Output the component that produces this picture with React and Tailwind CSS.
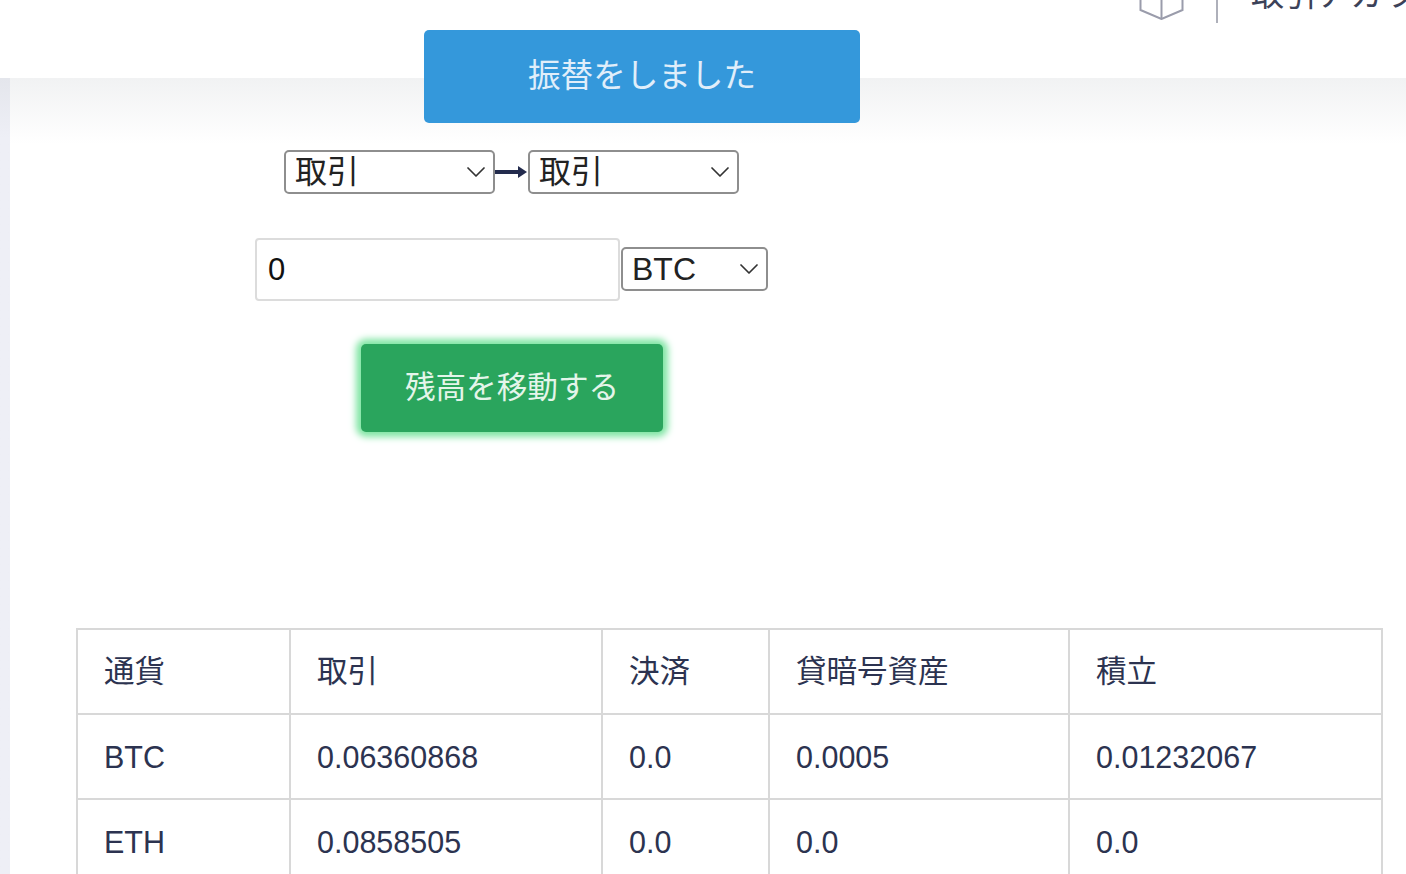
import { ChevronDown } from "lucide-react";

const FONT = "font-['Liberation_Sans','Noto_Sans_CJK_JP',sans-serif]";

const balances = [
  { coin: "BTC", trade: "0.06360868", settle: "0.0", lending: "0.0005", saving: "0.01232067" },
  { coin: "ETH", trade: "0.0858505", settle: "0.0", lending: "0.0", saving: "0.0" },
];

const cell = "border-2 border-[#d8d8d8] px-[26px] h-[85px] text-left font-normal align-middle";

const Select = ({ value, className }) => (
  <div className={`relative shrink-0 h-[44px] ${className}`}>
    <select
      defaultValue={value}
      className="block w-full h-full appearance-none rounded-[5px] border-2 border-[#8e8e8e] bg-white pl-[9px] text-[32px] leading-none text-[#222]"
    >
      <option>{value}</option>
    </select>
    <ChevronDown
      className="absolute right-[3px] top-[6px] w-[32px] h-[32px] text-[#333] pointer-events-none"
      strokeWidth={1.3}
    />
  </div>
);

export default function App() {
  return (
    <div className={`h-[874px] overflow-hidden bg-white ${FONT}`}>
      <header className="h-[78px] overflow-hidden flex items-start">
        <svg
          viewBox="0 0 44 24"
          className="ml-[1139px] -mt-[4px] w-[45px] h-[24px] shrink-0 text-[#9a9cab]"
          fill="none"
          stroke="currentColor"
          strokeWidth="2"
        >
          <path d="M1 0v14l21 9 21-9V0" />
          <path d="M22 0v23" />
        </svg>
        <div className="ml-[32px] w-[2px] h-[23px] bg-[#aeb0ba] shrink-0" />
        <div className="ml-[33px] -mt-[23px] whitespace-nowrap text-[33px] leading-[36px] text-[#3c4258]">
          取引アカウント
        </div>
      </header>

      <main className="flex h-[796px]">
        <div className="w-[10px] shrink-0 bg-gradient-to-b from-[#e4e6ec] to-[#eeeff6] to-[60px]" />
        <div className="flex-1 bg-gradient-to-b from-[#f1f2f3] to-white to-[66px]">
          <div className="-mt-[48px] ml-[414px] w-[436px] h-[93px] rounded-[5px] bg-[#3498db] flex items-center justify-center text-[32.6px] text-[#e0eefa]">
            振替をしました
          </div>

          <div className="mt-[27px] ml-[274px] flex items-center">
            <Select value="取引" className="w-[211px]" />
            <svg viewBox="0 0 33 14" className="w-[33px] h-[14px] shrink-0">
              <path d="M0 5h26v4H0z" fill="#232b4d" />
              <path d="M23 1l9 6-9 6z" fill="#232b4d" />
            </svg>
            <Select value="取引" className="w-[211px]" />
          </div>

          <div className="mt-[44px] ml-[245px] flex items-start">
            <input
              defaultValue="0"
              className="w-[365px] h-[63px] rounded-[4px] border-2 border-[#dcdcdc] bg-white pl-[11px] pr-[12px] text-[31px] text-[#111]"
            />
            <Select value="BTC" className="w-[147px] mt-[9px] ml-[1px]" />
          </div>

          <button
            type="button"
            className="block mt-[43px] ml-[351px] w-[302px] h-[88px] rounded-[5px] bg-[#2aa55d] text-[30.6px] text-[#e4f5ea] shadow-[0_0_7px_5px_#7fe5a3]"
          >
            残高を移動する
          </button>

          <table className="mt-[196px] ml-[66px] w-[1306px] table-fixed border-collapse text-[30.5px] text-[#2c3350]">
            <colgroup>
              <col className="w-[213px]" />
              <col className="w-[312px]" />
              <col className="w-[167px]" />
              <col className="w-[300px]" />
              <col className="w-[313px]" />
            </colgroup>
            <thead>
              <tr>
                <th className={cell}>通貨</th>
                <th className={cell}>取引</th>
                <th className={cell}>決済</th>
                <th className={cell}>貸暗号資産</th>
                <th className={cell}>積立</th>
              </tr>
            </thead>
            <tbody>
              {balances.map((row) => (
                <tr key={row.coin}>
                  <td className={`${cell} pt-[2px]`}>{row.coin}</td>
                  <td className={`${cell} pt-[2px]`}>{row.trade}</td>
                  <td className={`${cell} pt-[2px]`}>{row.settle}</td>
                  <td className={`${cell} pt-[2px]`}>{row.lending}</td>
                  <td className={`${cell} pt-[2px]`}>{row.saving}</td>
                </tr>
              ))}
            </tbody>
          </table>
        </div>
      </main>
    </div>
  );
}
